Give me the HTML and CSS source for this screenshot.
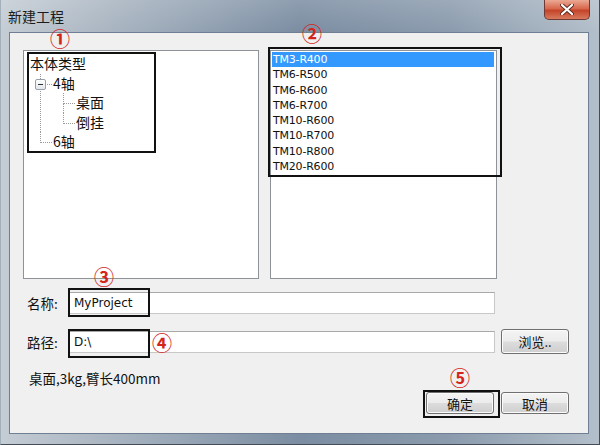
FILE: index.html
```html
<!DOCTYPE html>
<html lang="zh-CN">
<head>
  <meta charset="UTF-8" />
  <title>新建工程</title>
  <link rel="stylesheet" href="styles.css">
</head>
<body>

  <div class="window">
    <!-- Title bar -->
    <div class="titlebar">
      <span class="title">新建工程</span>
      <span class="close">
        <svg width="14" height="11" viewBox="0 0 14 11">
          <path d="M2 1 L12 10 M12 1 L2 10" stroke="#5a2a20" stroke-width="4" stroke-linecap="round"/>
          <path d="M2 1 L12 10 M12 1 L2 10" stroke="#fff" stroke-width="2.2" stroke-linecap="round"/>
        </svg>
      </span>
    </div>

    <!-- Dialog body -->
    <div class="client">
      <div class="panels">
        <div class="panel tree">
          <div class="node root">本体类型</div>
          <ul class="level1">
            <li>
              <span class="toggle"></span>
              <span class="node">4轴</span>
              <ul class="level2">
                <li><span class="node">桌面</span></li>
                <li><span class="node">倒挂</span></li>
              </ul>
            </li>
            <li><span class="node">6轴</span></li>
          </ul>
        </div>
        <ul class="panel list">
          <li class="selected">TM3-R400</li>
          <li>TM6-R500</li>
          <li>TM6-R600</li>
          <li>TM6-R700</li>
          <li>TM10-R600</li>
          <li>TM10-R700</li>
          <li>TM10-R800</li>
          <li>TM20-R600</li>
        </ul>
      </div>

      <div class="row name-row">
        <label>名称:</label>
        <div class="input">MyProject</div>
      </div>

      <div class="row path-row">
        <label>路径:</label>
        <div class="input">D:\</div>
        <button class="btn">浏览..</button>
      </div>

      <div class="status">桌面,3kg,臂长400mm</div>

      <div class="actions">
        <button class="btn">确定</button>
        <button class="btn">取消</button>
      </div>
    </div>

    <!-- Annotations -->
    <span class="mark m1">①</span>
    <span class="mark m2">②</span>
    <span class="mark m3">③</span>
    <span class="mark m4">④</span>
    <span class="mark m5">⑤</span>
    <span class="box b1"></span>
    <span class="box b2"></span>
    <span class="box b3"></span>
    <span class="box b4"></span>
    <span class="box b5"></span>
  </div>

</body>
</html>
```

FILE: styles.css
```css
/* --- Reset --- */
* {
  box-sizing: border-box;
  margin: 0;
  padding: 0;
}
body {
  width: 600px;
  height: 445px;
  overflow: hidden;
  background: #fff;
  font-family: "Noto Sans CJK SC", "DejaVu Sans", sans-serif;
  color: #111;
}
ul {
  list-style: none;
}

/* --- Window frame --- */
.window {
  position: relative;
  width: 600px;
  height: 445px;
  display: flex;
  flex-direction: column;
  border: 1px solid #454c55;
  border-top: none;
  border-left-color: #a3afbb;
  background:
    linear-gradient(180deg, rgba(255,255,255,0.15) 0, rgba(255,255,255,0) 32px),
    linear-gradient(90deg, #c4ccd4 0%, #a6b2bf 20%, #7b8da2 50%, #8b9bad 75%, #b3bfca 100%);
}

.titlebar {
  height: 32px;
  display: flex;
  align-items: flex-start;
  padding-left: 7px;
}
.title {
  font-size: 14px;
  line-height: 14px;
  margin-top: 9px;
  color: #1c1c1c;
}
.close {
  margin-left: auto;
  margin-right: 9px;
  width: 46px;
  height: 20px;
  display: flex;
  align-items: center;
  justify-content: center;
  border: 1px solid #6e3a33;
  border-top: none;
  border-radius: 0 0 5px 5px;
  background: linear-gradient(180deg, #eba995 0%, #d8684c 45%, #c4442a 55%, #d87a5e 100%);
}

/* --- Client area --- */
.client {
  margin: 0 10px 0 8px;
  height: 402px;
  background: #f0f0f0;
  border: 1px solid #6f8094;
  padding-top: 17px;
  padding-left: 13px;
}

.panels {
  display: grid;
  grid-template-columns: 236px 227px;
  gap: 11px;
  height: 229px;
}
.panel {
  background: #fff;
  border: 1px solid #8e9299;
}

/* --- Tree --- */
.tree {
  padding: 3px 6px 2px;
  font-size: 14px;
}
.tree .node {
  line-height: 19.5px;
  display: block;
}
.level1 > li,
.level2 > li {
  position: relative;
  padding-left: 23px;
}
.level1 > li::before,
.level2 > li::before {
  content: "";
  position: absolute;
  left: 10px;
  top: 0;
  width: 11px;
  height: 10px;
  border-left: 1px dotted #9a9a9a;
  border-bottom: 1px dotted #9a9a9a;
}
.level1 > li:not(:last-child)::after,
.level2 > li:not(:last-child)::after {
  content: "";
  position: absolute;
  left: 10px;
  top: 10px;
  bottom: 0;
  border-left: 1px dotted #9a9a9a;
}
.toggle {
  position: absolute;
  left: 5px;
  top: 5px;
  width: 11px;
  height: 11px;
  z-index: 1;
  border: 1px solid #97a0ab;
  border-radius: 2px;
  background: linear-gradient(180deg, #fff, #e3e6ea);
}
.toggle::after {
  content: "";
  position: absolute;
  left: 2px;
  right: 2px;
  top: 4px;
  height: 1px;
  background: #333;
}

/* --- List --- */
.list {
  padding: 1px;
  font-family: "DejaVu Sans", sans-serif;
  font-size: 11px;
  letter-spacing: -0.2px;
}
.list li {
  height: 15.3px;
  line-height: 15.3px;
  padding-left: 1px;
  margin-right: 1px;
}
.list li.selected {
  background: #3399ff;
  color: #fff;
}

/* --- Form rows --- */
.row {
  display: flex;
  align-items: center;
  height: 25px;
  padding-left: 4px;
}
.name-row {
  margin-top: 11px;
}
.path-row {
  margin-top: 14px;
}
.row label {
  width: 41px;
  font-size: 13.5px;
}
.input {
  width: 427px;
  height: 22px;
  background: #fff;
  border: 1px solid #c8c8c8;
  border-top-color: #a9a9a9;
  padding-left: 5px;
  font-family: "DejaVu Sans", sans-serif;
  font-size: 12px;
  line-height: 20px;
}
.path-row .btn {
  margin-left: 6px;
}

.btn {
  width: 68px;
  height: 25px;
  font-family: "Noto Sans CJK SC", sans-serif;
  font-size: 13px;
  color: #111;
  border: 1px solid #707070;
  border-radius: 3px;
  background: linear-gradient(180deg, #f4f4f4 0%, #ececec 48%, #dcdcdc 52%, #cfcfcf 100%);
  box-shadow: inset 0 0 0 1px #fbfbfb;
}

.status {
  margin-top: 14px;
  padding-left: 6px;
  font-size: 13.5px;
  line-height: 20px;
}

.actions {
  margin-top: 4px;
  display: flex;
  gap: 7px;
  padding-left: 403px;
}
.actions .btn {
  height: 22px;
}

/* --- Annotations --- */
.mark {
  position: absolute;
  font-size: 20px;
  font-weight: bold;
  line-height: 18px;
  width: 24px;
  text-align: center;
  color: #d4241c;
}
.m1 { left: 47px; top: 30px; }
.m2 { left: 299px; top: 25px; }
.m3 { left: 91px; top: 268px; }
.m4 { left: 149px; top: 334px; }
.m5 { left: 447px; top: 369px; }

.box {
  position: absolute;
  border: 2px solid #111;
}
.b1 { left: 26px; top: 52px; width: 129px; height: 101px; }
.b2 { left: 267px; top: 47px; width: 234px; height: 130px; }
.b3 { left: 67px; top: 288px; width: 82px; height: 29px; }
.b4 { left: 67px; top: 329px; width: 82px; height: 29px; }
.b5 { left: 422px; top: 390px; width: 77px; height: 28px; }
```
